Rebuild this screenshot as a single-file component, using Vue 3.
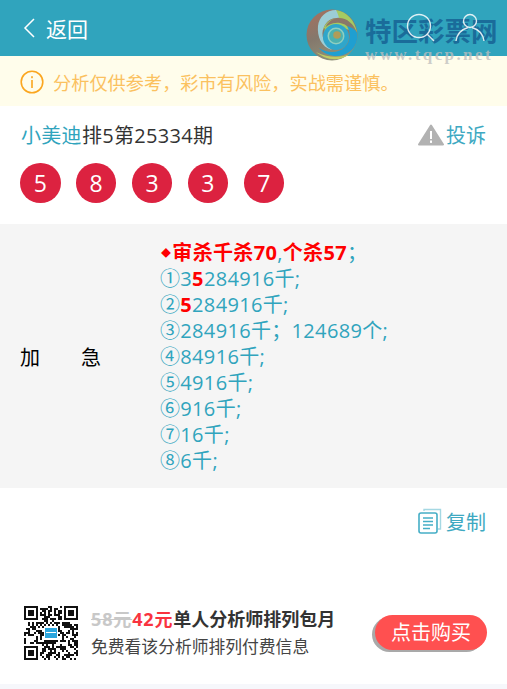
<template>
  <div class="page">
    <header class="topbar">
      <div class="back">
        <svg class="back-icon" viewBox="0 0 12 20" width="12" height="20">
          <path d="M11 1 L2 10 L11 19" fill="none" stroke="#fff" stroke-width="1.5" />
        </svg>
        <span>返回</span>
      </div>
      <div class="top-icons">
        <svg viewBox="0 0 34 34" width="34" height="34">
          <circle cx="13" cy="13" r="11.5" fill="none" stroke="#fff" stroke-width="1.4" />
          <path d="M21 21 L28 28" stroke="#fff" stroke-width="1.4" />
        </svg>
        <svg viewBox="0 0 32 34" width="32" height="34">
          <circle cx="16" cy="8" r="6.5" fill="none" stroke="#fff" stroke-width="1.4" />
          <path d="M2 28 C3 20 9 16 14 14.5 M30 28 C29 20 23 16 18 14.5" fill="none" stroke="#fff" stroke-width="1.4" />
        </svg>
      </div>
    </header>

    <div class="notice">
      <svg viewBox="0 0 24 24" width="24" height="24">
        <circle cx="12" cy="12" r="10.8" fill="none" stroke="#fba61f" stroke-width="1.6" />
        <rect x="11.2" y="10" width="1.6" height="8" fill="#fba61f" />
        <rect x="11.2" y="6.2" width="1.6" height="2" fill="#fba61f" />
      </svg>
      <span>分析仅供参考，彩市有风险，实战需谨慎。</span>
    </div>

    <section class="draw">
      <div class="draw-head">
        <div class="draw-title"><span class="author">小美迪</span>排5第25334期</div>
        <div class="report">
          <svg viewBox="0 0 26 22" width="26" height="22">
            <path d="M13 1.5 L25 20.5 L1 20.5 Z" fill="#b2b2b2" stroke="#b2b2b2" stroke-width="2" stroke-linejoin="round" />
            <rect x="12" y="7" width="2" height="8" fill="#fff" />
            <rect x="12" y="16.5" width="2" height="2.4" fill="#fff" />
          </svg>
          <span>投诉</span>
        </div>
      </div>
      <div class="balls">
        <span v-for="(n, i) in balls" :key="i" class="ball">{{ n }}</span>
      </div>
    </section>

    <section class="plan">
      <div class="plan-label"><span>加</span><span>急</span></div>
      <div class="plan-body">
        <div><b class="hot"><span class="diamond">◆</span>审杀千杀70</b>,<b class="hot">个杀57</b>；</div>
        <div>①3<b class="hot">5</b>284916千;</div>
        <div>②<b class="hot">5</b>284916千;</div>
        <div>③284916千；124689个;</div>
        <div>④84916千;</div>
        <div>⑤4916千;</div>
        <div>⑥916千;</div>
        <div>⑦16千;</div>
        <div>⑧6千;</div>
      </div>
    </section>

    <div class="copy-row">
      <svg viewBox="0 0 24 26" width="24" height="26" fill="none">
        <path d="M6 3 V1.5 H22.5 V21 H20" stroke="#a5d8e3" stroke-width="1.4" />
        <rect x="1" y="5" width="18" height="20" rx="2" stroke="#45aec6" stroke-width="1.6" />
        <path d="M5 10 H15 M5 13.5 H15 M5 17 H15 M5 20.5 H12" stroke="#45aec6" stroke-width="1.4" />
      </svg>
      <span>复制</span>
    </div>

    <section class="promo">
      <svg class="qr" viewBox="0 0 27 27" width="54" height="54" shape-rendering="crispEdges">
        <rect v-for="c in qrCells" :key="c.k" :x="c.x" :y="c.y" width="1" height="1" fill="#111" />
        <rect x="10" y="10" width="7" height="7" fill="#fff" />
        <rect x="10.5" y="11" width="6" height="5" fill="#2aa5dd" />
        <rect x="11" y="13" width="5" height="0.5" fill="#fff" />
      </svg>
      <div class="promo-text">
        <div class="promo-title"><s>58元</s><em>42元</em>单人分析师排列包月</div>
        <div class="promo-sub">免费看该分析师排列付费信息</div>
      </div>
      <button class="buy">点击购买</button>
    </section>

    <div class="footer-strip"></div>

    <!-- 水印 -->
    <div class="watermark">
      <svg class="wm-logo" viewBox="0 0 52 52" width="52" height="52">
        <defs>
          <linearGradient id="wmg" x1="0" y1="0" x2="0.4" y2="1">
            <stop offset="0" stop-color="#a8705e" />
            <stop offset="0.55" stop-color="#84786c" />
            <stop offset="1" stop-color="#8f8f78" />
          </linearGradient>
        </defs>
        <circle cx="26" cy="26" r="25.5" fill="url(#wmg)" />
        <path d="M30 1 C20 1 13 8 12 17 C11 27 15 38 26 41 C18 35 14 26 18 18 C21 11 27 8 36 9 C34 5 33 3 30 1 Z" fill="#9ccdd6" />
        <path d="M30 1 C41 3 49 11 51 24 C48 15 41 9 33 9 C26 9 19 13 17 21 C21 16 27 13 34 14 C39 15 42 17 44 21 L30 18 C24 18 19 24 20 30 C16 22 20 10 33 9 C32 5 31 3 30 1 Z" fill="#a5cb62" />
        <path d="M51 24 C53 38 42 48 28 47 C22 46 17 44 13 39 C22 45 33 44 39 38 C45 32 45 24 41 17 C47 19 50 21 51 24 Z" fill="#1f9fd1" />
        <circle cx="30" cy="28" r="13" fill="#2fa6cb" />
        <circle cx="30" cy="27" r="8.5" fill="#8fcfc0" />
        <circle cx="30" cy="27" r="7" fill="#4bb1b0" />
        <circle cx="31" cy="26" r="3.8" fill="#b09c58" />
        <path d="M10 43 C18 50 32 54 44 45 C35 49 22 49 10 43 Z" fill="#c0cb62" />
      </svg>
      <div class="wm-text">
        <div class="wm-name">特区彩票网</div>
        <div class="wm-url">www.tqcp.net</div>
      </div>
    </div>
  </div>
</template>

<script setup>
const balls = [5, 8, 3, 3, 7];

// 二维码只是个示意，按固定种子生成
const size = 27;
function inFinder(x, y) {
  return (x < 8 && y < 8) || (x > size - 9 && y < 8) || (x < 8 && y > size - 9);
}
function finderOn(x, y) {
  const fx = x < 8 ? x : x - (size - 7);
  const fy = y < 8 ? y : y - (size - 7);
  if (fx < 0 || fy < 0 || fx > 6 || fy > 6) return false;
  if (fx === 0 || fx === 6 || fy === 0 || fy === 6) return true;
  return fx >= 2 && fx <= 4 && fy >= 2 && fy <= 4;
}
const qrCells = [];
let seed = 7;
for (let y = 0; y < size; y++) {
  for (let x = 0; x < size; x++) {
    seed = (seed * 1103515245 + 12345) & 0x7fffffff;
    const on = inFinder(x, y) ? finderOn(x, y) : (seed >> 16) % 2 === 0;
    if (on) qrCells.push({ k: x + '-' + y, x, y });
  }
}
</script>

<style scoped>
.page {
  position: relative;
  width: 507px;
  height: 689px;
  overflow: hidden;
  background: #fff;
  font-family: "Open Sans", "Noto Sans CJK SC", sans-serif;
  color: #333;
}
.topbar {
  height: 56px;
  background: #30a4bd;
  display: flex;
  align-items: center;
  justify-content: space-between;
  padding: 0 21px 0 23px;
  box-sizing: border-box;
  color: #fff;
}
.back {
  display: flex;
  align-items: center;
  gap: 11px;
  font-size: 21px;
}
.top-icons {
  position: relative;
  z-index: 2;
  display: flex;
  align-items: center;
  gap: 14px;
  margin-top: 3px;
  opacity: 0.85;
}
.notice {
  height: 50px;
  background: #fffdeb;
  display: flex;
  align-items: center;
  gap: 9px;
  padding: 2px 0 0 20px;
  box-sizing: border-box;
  font-size: 18.2px;
  color: #fbc15f;
}
.draw {
  height: 118px;
  padding: 0 21px 0 21px;
}
.draw-head {
  height: 57px;
  display: flex;
  align-items: center;
  justify-content: space-between;
  font-size: 20px;
}
.draw-title {
  letter-spacing: 0.3px;
}
.author {
  color: #30a4bd;
}
.report {
  display: flex;
  align-items: center;
  gap: 2px;
  color: #3ea9c2;
  font-size: 20px;
}
.balls {
  display: flex;
  gap: 15.4px;
  margin-left: -1px;
}
.ball {
  width: 40.5px;
  height: 40px;
  border-radius: 50%;
  background: #dc2240;
  color: #fff;
  font-size: 23px;
  line-height: 40px;
  text-align: center;
}
.plan {
  height: 264px;
  background: #f5f5f5;
  display: flex;
  align-items: center;
}
.plan-label {
  width: 160px;
  flex-shrink: 0;
  display: flex;
  gap: 41px;
  padding-left: 20px;
  box-sizing: border-box;
  font-size: 20px;
  color: #000;
}
.plan-body {
  font-size: 20px;
  line-height: 26px;
  letter-spacing: 0.33px;
  color: #30a4bd;
  padding-top: 1px;
}
.hot {
  color: #f00;
  font-weight: 700;
}
.diamond {
  font-size: 10px;
  vertical-align: 3px;
  margin: 0 1px;
}
.copy-row {
  height: 66px;
  display: flex;
  align-items: center;
  justify-content: flex-end;
  gap: 4px;
  padding-right: 21px;
  font-size: 20px;
  color: #3ea9c2;
}
.promo {
  margin-top: 50px;
  display: flex;
  align-items: center;
  padding: 0 20px 0 24px;
}
.qr {
  flex-shrink: 0;
  margin-right: 13px;
}
.promo-text {
  flex: 1;
  padding-top: 1px;
}
.promo-title {
  font-size: 18px;
  font-weight: 700;
  line-height: 28px;
  color: #333;
}
.promo-title s {
  color: #c8c8c8;
  letter-spacing: 0.85px;
}
.promo-title em {
  font-style: normal;
  color: #f9333f;
  letter-spacing: 0.85px;
}
.promo-sub {
  font-size: 16.8px;
  line-height: 28px;
  color: #444;
}
.buy {
  width: 112px;
  height: 35px;
  padding: 0;
  border: 0;
  border-radius: 18px;
  background: #ff5050;
  box-shadow: -3px 2px 0 #a9a9a9;
  color: #fff;
  font-family: inherit;
  font-size: 20px;
  line-height: 35px;
}
.footer-strip {
  position: absolute;
  left: 0;
  right: 0;
  bottom: 0;
  height: 5px;
  background: #f6f7fb;
}
.watermark {
  position: absolute;
  left: 306px;
  top: 9px;
  display: flex;
  align-items: flex-start;
  gap: 7px;
  pointer-events: none;
}
.wm-text {
  padding-top: 9px;
}
.wm-name {
  font-size: 26.5px;
  font-weight: 700;
  line-height: 27px;
  color: #1a6c9a;
}
.wm-url {
  font-family: "Liberation Serif", serif;
  font-size: 17px;
  font-weight: 700;
  line-height: 20px;
  letter-spacing: 2.4px;
  color: rgba(190, 190, 190, 0.75);
  white-space: nowrap;
}
</style>
